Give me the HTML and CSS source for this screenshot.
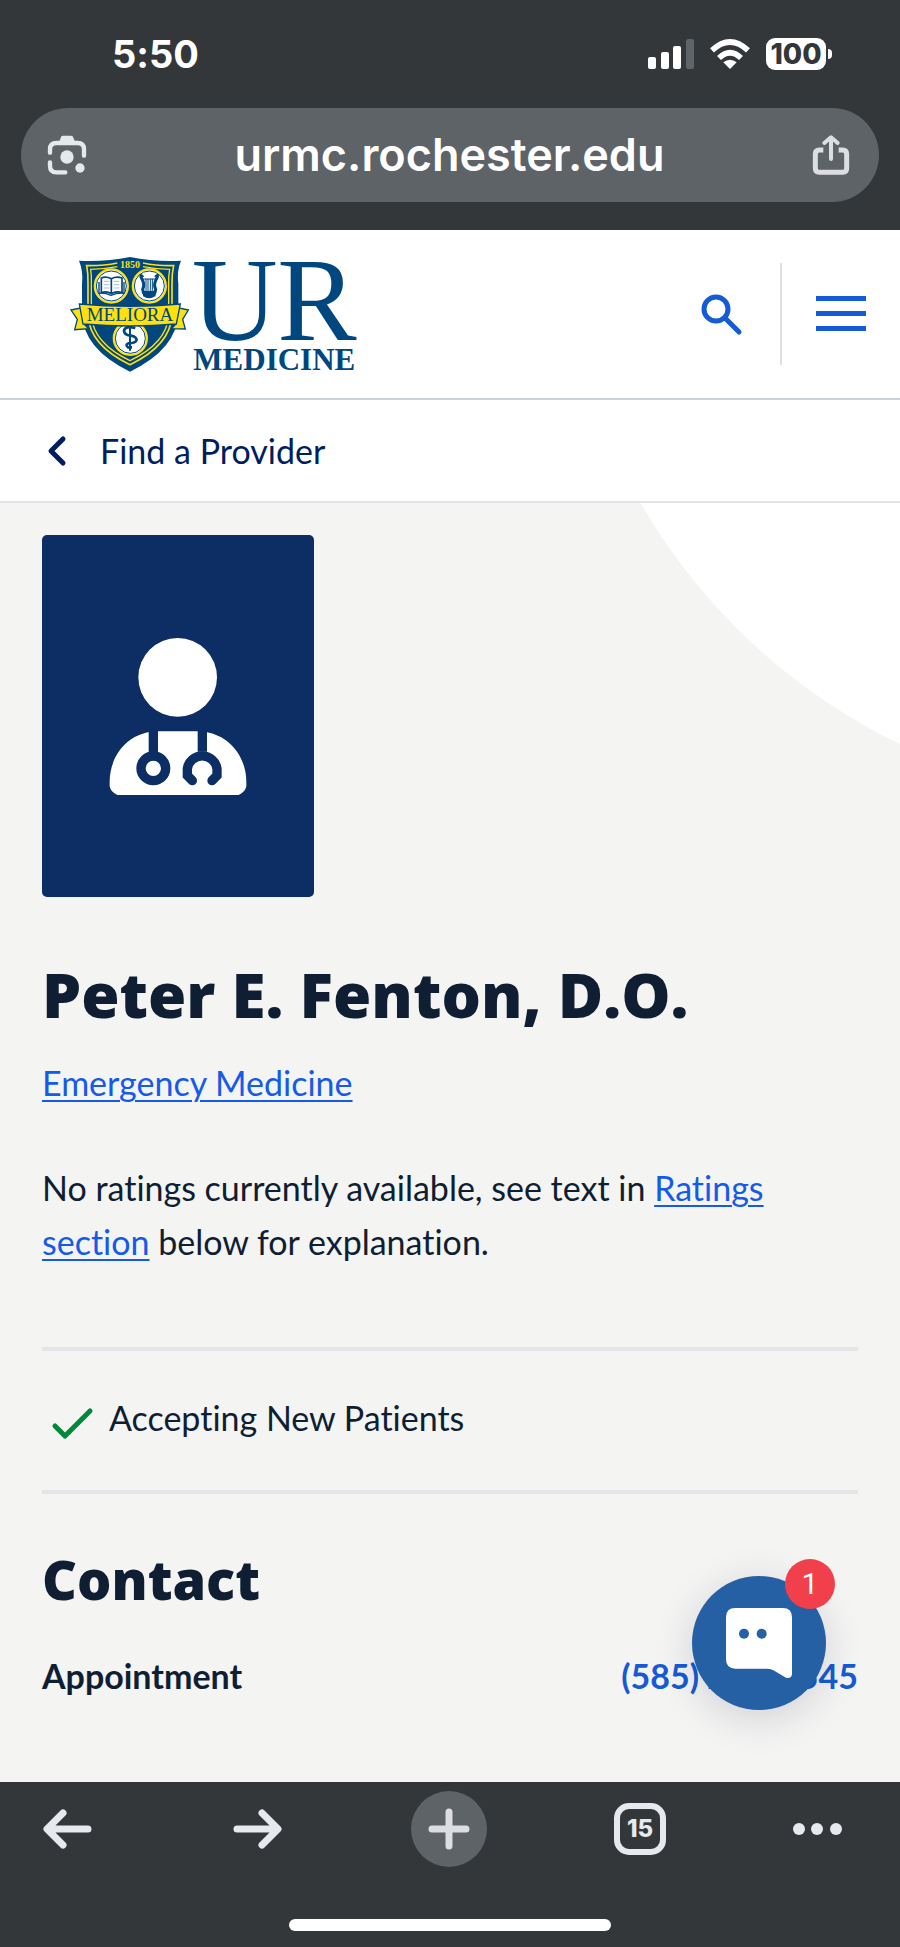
FILE: index.html
```html
<!DOCTYPE html>
<html lang="en">
<head>
    <meta charset="UTF-8">
    <meta name="viewport" content="width=device-width, initial-scale=1.0">
    <title>Peter E. Fenton, D.O. - UR Medicine</title>
    <link rel="stylesheet" href="styles.css">
</head>
<body>
    <div class="browser-top">
        <div class="status-bar">
            <span class="time">5:50</span>
            <div class="status-icons">
                <svg width="46" height="30" viewBox="0 0 46 30" fill="#fff">
                    <rect x="0" y="18" width="8" height="12" rx="2"/>
                    <rect x="13" y="13" width="8" height="17" rx="2"/>
                    <rect x="25" y="7" width="8" height="23" rx="2"/>
                    <rect x="38" y="0" width="8" height="30" rx="2" fill="#5f6468"/>
                </svg>
                <svg width="40" height="30" viewBox="0 0 120 90" fill="none" stroke="#fff" stroke-width="17">
                    <path d="M6 34 Q60 -16 114 34"/>
                    <path d="M27 57 Q60 26 93 57"/>
                    <path d="M60 90 L40 70 Q60 54 80 70 Z" fill="#fff" stroke="none"/>
                </svg>
                <div class="battery"><span>100</span></div>
            </div>
        </div>
        <div class="url-bar">
            <button class="icon-btn" aria-label="Search with camera">
                <svg width="40" height="40" viewBox="140 406 120 120" fill="none" stroke="#e6e9ec" stroke-width="13" stroke-linecap="round">
                    <path d="M149 459 V449 Q149 430 168 430 H232 Q251 430 251 449 V468"/>
                    <path d="M149 488 V499 Q149 518 168 518 H195"/>
                    <path d="M176 428 L183 410 Q185 408 188 408 H212 Q215 408 217 410 L225 428 Z" fill="#e6e9ec" stroke="none"/>
                    <circle cx="200" cy="472" r="20" fill="#e6e9ec" stroke="none"/>
                    <circle cx="239" cy="505" r="14" fill="#e6e9ec" stroke="none"/>
                </svg>
            </button>
            <span class="url">urmc.rochester.edu</span>
            <button class="icon-btn" aria-label="Share">
                <svg width="38" height="40" viewBox="1084 406 114 120" fill="none" stroke="#dcdee3" stroke-width="15" stroke-linecap="round" stroke-linejoin="round">
                    <path d="M1118 451 H1106 Q1094 451 1094 463 V506 Q1094 518 1106 518 H1176 Q1188 518 1188 506 V463 Q1188 451 1176 451 H1164" stroke-linecap="butt"/>
                    <path d="M1141 478 V416 M1121 430 L1141 413 L1161 430" stroke-width="12"/>
                </svg>
            </button>
        </div>
    </div>

    <header class="site-header">
        <a href="#" class="logo" aria-label="UR Medicine">
            <svg width="290" height="120" viewBox="30 40 870 360">
                <path d="M57 60 Q135 64 210 49 Q285 64 363 60 Q350 90 355 130 V215 Q352 325 210 393 Q68 325 66 215 V130 Q70 90 57 60 Z" fill="#00467f"/>
                <path d="M172 67 Q130 76 80 75 Q85 100 84 130 V225 Q90 315 210 372 Q330 315 336 225 V130 Q335 100 341 75 Q290 76 249 67" fill="none" stroke="#fde00d" stroke-width="5"/>
                <path d="M172 78 Q130 86 92 86 Q95 105 94 130 V225 Q100 308 210 360 Q320 308 326 225 V130 Q325 105 329 86 Q290 86 249 78" fill="none" stroke="#fde00d" stroke-width="4"/>
                <text x="210" y="83" text-anchor="middle" class="logo-year">1850</text>
                <g fill="#fff" stroke="#fde00d" stroke-width="6">
                    <circle cx="154" cy="136" r="50"/>
                    <circle cx="268" cy="136" r="50"/>
                    <circle cx="211" cy="293" r="50"/>
                </g>
                <g fill="none" stroke="#00467f" stroke-width="3">
                    <circle cx="154" cy="136" r="45"/>
                    <circle cx="268" cy="136" r="45"/>
                    <circle cx="211" cy="293" r="45"/>
                </g>
                <g fill="none" stroke="#00467f" stroke-width="5">
                    <path d="M154 114 Q138 106 124 112 V156 Q140 150 154 159 Q168 150 186 156 V112 Q170 106 154 114 Z M154 114 V159"/>
                    <path d="M117 124 V158 Q136 156 153 164 Q172 156 192 158 V124" stroke-width="4"/>
                    <path d="M131 122 H148 M131 132 H148 M131 142 H148 M161 122 H178 M161 132 H178 M161 142 H178" stroke="#a9bfd2" stroke-width="3"/>
                    <path d="M249 110 Q239 98 244 112 Q256 130 248 146 Q250 168 267 168 Q285 168 287 146 Q279 130 291 112 Q296 98 286 110" stroke-width="9"/>
                    <path d="M246 115 H290 M258 115 V150 M264 115 V150 M271 115 V150 M277 115 V150" stroke-width="3"/>
                    <path d="M252 153 H284 V165 H252 Z" fill="#00467f"/>
                    <path d="M210 262 V330" stroke-width="6"/>
                    <path d="M226 262 Q196 254 192 270 Q192 282 212 285 Q232 288 229 300 Q224 308 206 308 Q194 312 204 320 H216" stroke-width="8"/>
                </g>
                <path d="M33 208 L72 200 V250 L86 264 L44 267 L52 236 Z M385 208 L348 200 V250 L334 264 L376 265 L368 236 Z" fill="#fde00d" stroke="#00467f" stroke-width="4"/>
                <path d="M58 190 Q210 204 361 190 L349 250 Q210 262 69 250 Z" fill="#fde00d" stroke="#00467f" stroke-width="4"/>
                <text x="210" y="240" text-anchor="middle" class="logo-motto">MELIORA</text>
                <text x="395" y="299" class="logo-ur">U</text>
                <text x="652" y="299" class="logo-ur">R</text>
                <text x="400" y="389" class="logo-medicine">MEDICINE</text>
            </svg>
        </a>
        <div class="header-actions">
            <button class="icon-btn" aria-label="Search">
                <svg width="41" height="41" viewBox="0 0 41 41" fill="none" stroke="#155bd5" stroke-width="5" stroke-linecap="round">
                    <circle cx="15" cy="15" r="12"/>
                    <path d="M24 24 L38 38"/>
                </svg>
            </button>
            <button class="icon-btn menu-btn" aria-label="Menu">
                <svg width="50" height="36" viewBox="0 0 50 36" fill="#155bd5">
                    <rect width="50" height="5"/>
                    <rect y="15" width="50" height="5"/>
                    <rect y="30" width="50" height="5"/>
                </svg>
            </button>
        </div>
    </header>

    <nav class="breadcrumb">
        <a href="#">
            <svg width="18" height="30" viewBox="0 0 18 30" fill="none" stroke="#001e5f" stroke-width="5" stroke-linecap="round" stroke-linejoin="round">
                <path d="M15 3 L3 15 L15 27"/>
            </svg>
            Find a Provider
        </a>
    </nav>

    <main class="profile">
        <div class="profile-photo">
            <svg width="138" height="159" viewBox="329 714 414 477">
                <circle cx="535" cy="835" r="118" fill="#fff"/>
                <path d="M331 1149 C331 1072 382 1009 452 999 Q462 997 476 997 H596 Q610 997 620 999 C690 1011 741 1072 741 1149 V1162 Q738 1179 718 1188 H354 Q334 1179 331 1162 Z" fill="#fff"/>
                <g fill="none" stroke="#0c2e64" stroke-width="28">
                    <path d="M462 988 V1064 M609 988 V1058"/>
                    <circle cx="462" cy="1108" r="37"/>
                    <path d="M579 1145 L564 1130 V1109 A45 45 0 0 1 653 1109 V1130 L638 1145" stroke-linecap="round"/>
                </g>
            </svg>
        </div>
        <h1>Peter E. Fenton, D.O.</h1>
        <p class="specialty"><a href="#">Emergency Medicine</a></p>
        <p class="ratings">No ratings currently available, see text in <a href="#">Ratings section</a> below for explanation.</p>
        <div class="accepting">
            <svg width="41" height="32" viewBox="0 0 41 32" fill="none" stroke="#00883a" stroke-width="5" stroke-linecap="round" stroke-linejoin="round">
                <path d="M3 18 L13 28 L38 3"/>
            </svg>
            <span>Accepting New Patients</span>
        </div>
        <h2>Contact</h2>
        <dl class="contact-row">
            <dt>Appointment</dt>
            <dd><a href="tel:5852754545">(585) 275-4545</a></dd>
        </dl>

        <button class="chat-btn" aria-label="Open chat">
            <svg width="66" height="70" viewBox="678 261 198 210">
                <path d="M706 261 H848 Q876 261 876 289 V460 Q874 474 858 470 L820 448 Q812 443 804 443 H706 Q678 443 678 415 V289 Q678 261 706 261 Z" fill="#fff"/>
                <circle cx="732" cy="338" r="15" fill="#2560a5"/>
                <circle cx="785" cy="338" r="15" fill="#2560a5"/>
            </svg>
            <span class="chat-badge">1</span>
        </button>
    </main>

    <footer class="browser-bottom">
        <div class="toolbar">
            <button aria-label="Back">
                <svg width="50" height="42" viewBox="0 0 50 42" fill="none" stroke="#e6e9ee" stroke-width="7" stroke-linecap="round" stroke-linejoin="round">
                    <path d="M46 21 H6 M21 5 L5 21 L21 37"/>
                </svg>
            </button>
            <button aria-label="Forward">
                <svg width="50" height="42" viewBox="0 0 50 42" fill="none" stroke="#e6e9ee" stroke-width="7" stroke-linecap="round" stroke-linejoin="round">
                    <path d="M4 21 H44 M29 5 L45 21 L29 37"/>
                </svg>
            </button>
            <button class="new-tab" aria-label="New tab">
                <svg width="42" height="42" viewBox="0 0 42 42" stroke="#dcdee4" stroke-width="7" stroke-linecap="round">
                    <path d="M4 21 H38 M21 4 V38"/>
                </svg>
            </button>
            <button aria-label="Tabs"><span class="tab-count">15</span></button>
            <button class="more" aria-label="More">
                <svg width="49" height="12" viewBox="0 0 49 12" fill="#e6e9ee">
                    <circle cx="6" cy="6" r="6"/>
                    <circle cx="24" cy="6" r="6"/>
                    <circle cx="43" cy="6" r="6"/>
                </svg>
            </button>
        </div>
        <div class="home-indicator"></div>
    </footer>
</body>
</html>
```

FILE: styles.css
```css
* {
    box-sizing: border-box;
}
body {
    margin: 0;
    min-height: 100vh;
    display: flex;
    flex-direction: column;
    background-color: #f4f4f3;
    color: #0f1e33;
    font-family: Lato, sans-serif;
    font-size: 34px;
    font-variant-ligatures: none;
    line-height: 54px;
}
button {
    padding: 0;
    border: none;
    background: none;
    cursor: pointer;
}
svg {
    display: block;
    overflow: visible;
}
a {
    color: #155bea;
    text-decoration-thickness: 2px;
    text-underline-offset: 4px;
}

/* browser chrome */
.browser-top {
    background-color: #33373a;
    padding: 32px 21px 28px;
}
.status-bar {
    display: flex;
    justify-content: space-between;
    align-items: center;
    height: 44px;
    margin-bottom: 32px;
    padding: 0 47px 0 91px;
}
.time {
    font-family: Inter, sans-serif;
    font-size: 38px;
    font-weight: 700;
    color: white;
}
.status-icons {
    display: flex;
    align-items: center;
    gap: 16px;
}
.battery {
    position: relative;
    width: 60px;
    height: 32px;
    margin-right: 6px;
    border-radius: 9px;
    background-color: white;
    color: #33373a;
    font-family: Inter, sans-serif;
    font-size: 28px;
    font-weight: 800;
    line-height: 32px;
    text-align: center;
}
.battery::after {
    content: "";
    position: absolute;
    right: -6px;
    top: 11px;
    width: 4px;
    height: 10px;
    border-radius: 0 5px 5px 0;
    background-color: white;
}
.url-bar {
    display: flex;
    justify-content: space-between;
    align-items: center;
    height: 94px;
    padding: 0 29px 0 26px;
    border-radius: 47px;
    background-color: #5e6367;
}
.url {
    font-family: Inter, sans-serif;
    font-size: 45px;
    font-weight: 600;
    color: white;
}

/* site header */
.site-header {
    display: flex;
    justify-content: space-between;
    align-items: center;
    height: 170px;
    padding: 0 34px 0 70px;
    background-color: white;
    border-bottom: 2px solid #c8d2df;
}
.logo text {
    font-family: "Liberation Serif", serif;
    fill: #00467f;
}
.logo .logo-year {
    font-size: 30px;
    font-weight: bold;
    fill: #fde00d;
}
.logo-motto {
    font-size: 57px;
}
.logo-ur {
    font-size: 357px;
}
.logo-medicine {
    font-size: 93px;
    font-weight: bold;
}
.header-actions {
    display: flex;
    align-items: center;
    gap: 38px;
}
.menu-btn {
    height: 102px;
    padding-left: 34px;
    border-left: 2px solid #dfe0e6;
}
.breadcrumb {
    height: 103px;
    padding: 0 48px;
    background-color: white;
    border-bottom: 2px solid #e1e2e3;
}
.breadcrumb a {
    display: flex;
    align-items: center;
    gap: 34px;
    height: 100%;
    color: #001e5f;
    text-decoration: none;
}

/* provider profile */
.profile {
    position: relative;
    flex: 1;
    overflow: hidden;
    padding: 32px 42px 0;
}
.profile::before {
    content: "";
    position: absolute;
    top: -896px;
    right: -857px;
    width: 1196px;
    height: 1196px;
    border-radius: 50%;
    background-color: white;
}
.profile-photo {
    display: flex;
    justify-content: center;
    align-items: center;
    width: 272px;
    height: 362px;
    border-radius: 5px;
    background-color: #0c2e64;
}
h1, h2 {
    font-family: "Open Sans", sans-serif;
    font-weight: 800;
}
h1 {
    margin: 61px 0 26px;
    font-size: 62px;
    line-height: 72px;
}
.profile p {
    margin: 0;
}
.profile .ratings {
    margin-top: 51px;
    padding-right: 40px;
}
.accepting {
    display: flex;
    align-items: center;
    gap: 16px;
    height: 147px;
    margin-top: 78px;
    padding: 0 0 6px 10px;
    border-top: 4px solid #e3e5e9;
    border-bottom: 4px solid #e3e5e9;
}
.accepting svg {
    margin-top: 12px;
}
h2 {
    margin: 53px 0 38px;
    font-size: 54px;
    line-height: 64px;
}
.contact-row {
    display: flex;
    justify-content: space-between;
    margin: 0;
    font-weight: 700;
}
.contact-row dd {
    margin: 0;
}
.contact-row a {
    color: #155bd5;
    text-decoration: none;
}

/* chat launcher */
.chat-btn {
    position: absolute;
    right: 74px;
    bottom: 72px;
    display: flex;
    justify-content: center;
    align-items: center;
    width: 134px;
    height: 134px;
    border-radius: 50%;
    background-color: #2560a5;
    box-shadow: 0 8px 40px rgba(20, 20, 60, 0.15);
}
.chat-badge {
    position: absolute;
    top: -17px;
    right: -9px;
    width: 50px;
    height: 50px;
    border-radius: 50%;
    background-color: #f1404b;
    color: white;
    font-family: Roboto, sans-serif;
    font-size: 30px;
    line-height: 50px;
}

/* bottom toolbar */
.browser-bottom {
    padding: 9px 0 16px;
    background-color: #33373a;
}
.toolbar {
    display: flex;
    justify-content: space-between;
    padding: 0 58px 0 29px;
}
.toolbar button {
    display: flex;
    justify-content: center;
    align-items: center;
    width: 76px;
    height: 76px;
}
.toolbar .more {
    width: 49px;
}
.toolbar .new-tab {
    border-radius: 50%;
    background-color: #5e6367;
}
.tab-count {
    width: 52px;
    height: 52px;
    border: 6px solid #e6e9ee;
    border-radius: 15px;
    color: #e6e9ee;
    font-family: Inter, sans-serif;
    font-size: 24px;
    font-weight: 800;
    line-height: 40px;
}
.home-indicator {
    width: 322px;
    height: 12px;
    margin: 52px auto 0;
    border-radius: 6px;
    background-color: white;
}
```
